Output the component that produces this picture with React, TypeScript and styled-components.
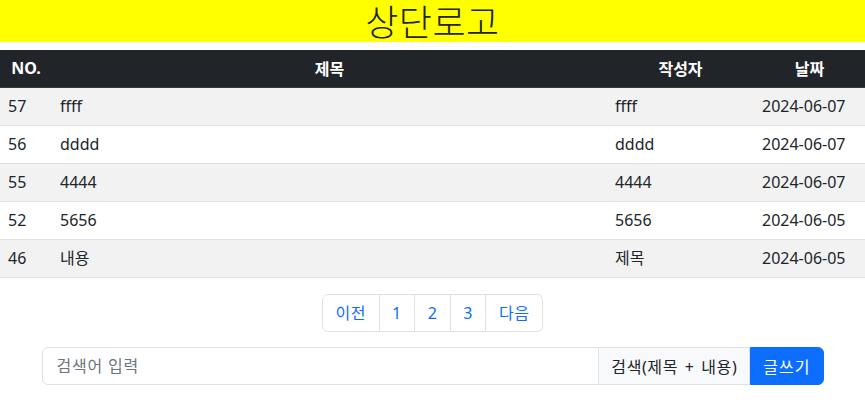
import React from 'react';
import styled, { createGlobalStyle } from 'styled-components';

const GlobalStyle = createGlobalStyle`
  body {
    margin: 0;
    background: #fff;
    font-family: "Noto Sans", "Noto Sans CJK KR", sans-serif;
    color: #212529;
  }
`;

const TopBar = styled.header`
  background: #ffff00;
  height: 42px;
  display: flex;
  align-items: center;
  justify-content: center;
`;

const Logo = styled.h1`
  margin: 0;
  padding-top: 3px;
  font-size: 36px;
  font-weight: 300;
  letter-spacing: 0.5px;
  line-height: 36px;
  color: #212529;
`;

const Table = styled.table`
  width: 100%;
  margin-top: 8px;
  border-collapse: collapse;
  table-layout: fixed;
  font-size: 16px;
`;

const HeadCell = styled.th<{ $w?: number }>`
  width: ${(p) => (p.$w ? `${p.$w}px` : 'auto')};
  background: #212529;
  color: #fff;
  font-weight: 700;
  text-align: center;
  height: 37px;
  padding: 0 8px;
  box-sizing: border-box;
  border-bottom: 1px solid #373b3e;
`;

const Row = styled.tr<{ $striped: boolean }>`
  background: ${(p) => (p.$striped ? '#f2f2f2' : '#fff')};
`;

const Cell = styled.td`
  height: 38px;
  padding: 0 8px;
  box-sizing: border-box;
  border-bottom: 1px solid #dee2e6;
  line-height: 24px;
`;

const Pager = styled.nav`
  display: flex;
  justify-content: center;
  margin-top: 16px;
`;

const PageList = styled.ul`
  display: flex;
  list-style: none;
  margin: 0;
  padding: 0;
`;

const PageLink = styled.a<{ $first?: boolean; $last?: boolean }>`
  display: block;
  padding: 6px 12.5px;
  line-height: 24px;
  font-size: 16px;
  letter-spacing: 0.5px;
  color: #0d6efd;
  text-decoration: none;
  background: #fff;
  border: 1px solid #dee2e6;
  margin-left: ${(p) => (p.$first ? '0' : '-1px')};
  border-radius: ${(p) => (p.$first ? '6px 0 0 6px' : p.$last ? '0 6px 6px 0' : '0')};
`;

const SearchBar = styled.form`
  display: flex;
  max-width: 782px;
  margin: 15px auto 0;
  height: 38px;
`;

const SearchInput = styled.input`
  flex: 1;
  min-width: 0;
  padding: 6px 14px;
  font-size: 16px;
  font-family: inherit;
  letter-spacing: 0.8px;
  color: #212529;
  border: 1px solid #dee2e6;
  border-radius: 6px 0 0 6px;
  outline: none;
  &::placeholder {
    color: #6c757d;
  }
`;

const Addon = styled.span`
  display: flex;
  align-items: center;
  padding: 0 12px;
  font-size: 16px;
  letter-spacing: 0.6px;
  word-spacing: 2px;
  background: #f8f9fa;
  border: 1px solid #dee2e6;
  border-left: 0;
  color: #212529;
  white-space: nowrap;
`;

const WriteButton = styled.button`
  padding: 0 12px;
  font-size: 16px;
  font-family: inherit;
  letter-spacing: 1px;
  color: #fff;
  background: #0d6efd;
  border: 1px solid #0d6efd;
  border-radius: 0 6px 6px 0;
  cursor: pointer;
`;

const posts = [
  { no: 57, title: 'ffff', writer: 'ffff', date: '2024-06-07' },
  { no: 56, title: 'dddd', writer: 'dddd', date: '2024-06-07' },
  { no: 55, title: '4444', writer: '4444', date: '2024-06-07' },
  { no: 52, title: '5656', writer: '5656', date: '2024-06-05' },
  { no: 46, title: '내용', writer: '제목', date: '2024-06-05' },
];

const pages = ['이전', '1', '2', '3', '다음'];

export default function App() {
  return (
    <>
      <GlobalStyle />
      <TopBar>
        <Logo>상단로고</Logo>
      </TopBar>
      <Table>
        <thead>
          <tr>
            <HeadCell $w={52}>NO.</HeadCell>
            <HeadCell>제목</HeadCell>
            <HeadCell $w={147}>작성자</HeadCell>
            <HeadCell $w={111}>날짜</HeadCell>
          </tr>
        </thead>
        <tbody>
          {posts.map((post, i) => (
            <Row key={post.no} $striped={i % 2 === 0}>
              <Cell>{post.no}</Cell>
              <Cell>{post.title}</Cell>
              <Cell>{post.writer}</Cell>
              <Cell>{post.date}</Cell>
            </Row>
          ))}
        </tbody>
      </Table>
      <Pager>
        <PageList>
          {pages.map((label, i) => (
            <li key={label}>
              <PageLink href="#" $first={i === 0} $last={i === pages.length - 1}>
                {label}
              </PageLink>
            </li>
          ))}
        </PageList>
      </Pager>
      <SearchBar onSubmit={(e) => e.preventDefault()}>
        <SearchInput placeholder="검색어 입력" />
        <Addon>검색(제목 + 내용)</Addon>
        <WriteButton type="button">글쓰기</WriteButton>
      </SearchBar>
    </>
  );
}
